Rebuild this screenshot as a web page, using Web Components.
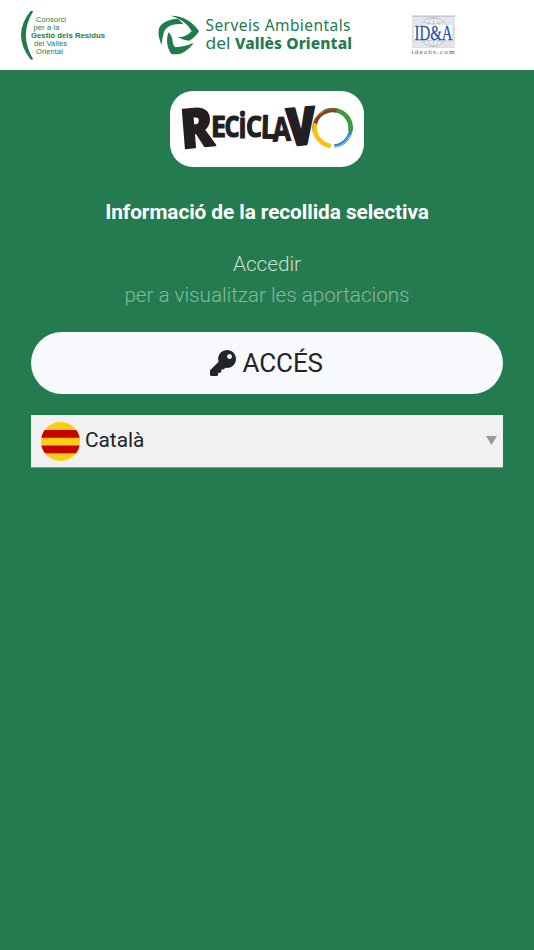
<!DOCTYPE html>
<html lang="ca"><head><meta charset="utf-8"><title>Reciclavo</title>
<style>body{margin:0;background:#257b50;font-family:Roboto,"Liberation Sans",sans-serif;color:#212529}</style></head>
<body><reciclavo-app></reciclavo-app>
<script>
const define=(name,html)=>{
  const t=document.createElement('template');t.innerHTML=html;
  customElements.define(name,class extends HTMLElement{
    constructor(){super();this.attachShadow({mode:'open'}).append(t.content.cloneNode(true));}
  });
};

define('consorci-logo',`<style>:host{display:block;width:88px;height:54px}svg{display:block;overflow:visible}text{font-family:"Liberation Sans",Arial,sans-serif;font-size:7.5px;fill:#257b50}</style>
<svg width="88" height="54" viewBox="20 8 88 54"><path d="M30.500 11 Q11.500 35 30.500 59.500 L33.300 59.500 Q18.500 35 33.300 11Z" fill="#207c4c"/>
<text x="36" y="22" textLength="30">Consorci</text><text x="33.5" y="30" textLength="26">per a la</text><text x="31" y="38" font-weight="bold" textLength="74" lengthAdjust="spacingAndGlyphs">Gestió dels Residus</text><text x="34" y="46.3" textLength="33">del Vallès</text><text x="36" y="54.3" textLength="27">Oriental</text></svg>`);

define('serveis-logo',`<style>:host{display:block;width:196px;height:42px}svg{display:block;overflow:visible}text{font-family:"Noto Sans","Open Sans",sans-serif;font-size:15.500px;fill:#257b50}</style>
<svg width="196" height="42" viewBox="158 14 196 42"><g fill="#207c4c" transform="translate(156 12) scale(.3333)">
<path d="M44 11 C76 10 110 27 129 58 Q118 76 100 86 Q84 86 66 76 Q90 76 107 58 C96 36 74 20 44 11Z"/>
<path d="M66 20 L83 37 C55 33 31 41 24 60 Q19 76 17 98 C6 76 5 56 12 43 C25 27 43 21 66 20Z"/>
<path d="M37 61 Q49 71 50 89 Q52 103 60 106 Q82 104 113 93 Q97 116 74 125 Q57 128 46 126 C33 108 30 84 37 61Z"/></g>
<text x="205.500" y="30.500" textLength="145" lengthAdjust="spacing">Serveis Ambientals</text><text x="205.500" y="49" textLength="25" lengthAdjust="spacingAndGlyphs">del</text><text x="235" y="49" font-weight="800" textLength="117">Vallès Oriental</text></svg>`);

define('idea-logo',`<style>:host{display:block;width:44px;height:40px}svg{display:block;overflow:visible}text{font-family:"Liberation Serif",serif;fill:#2854a5}</style>
<svg width="44" height="40" viewBox="411 15 44 40"><path fill="#dedee2" d="M412 16h43v32h-43z"/><g stroke="#f3f3f5" stroke-width=".7"><path d="M412 18h43M412 20h43M412 22h43M412 24h43M412 42h43M412 44h43M412 46h43"/></g><path d="M412 16h43" stroke="#9ba9ca" stroke-width=".8"/>
<g fill="none" stroke="#b9bdc8" stroke-width=".8"><circle cx="433.5" cy="32" r="14.5" fill="#ececef"/><ellipse cx="433.5" cy="32" rx="7" ry="14.5"/><path d="M433.500 17v29M423 22q10 4 21 0M423 42q10-4 21 0"/></g>
<path fill="#fff" d="M414 25h38v15h-38z"/>
<text x="414.500" y="39.500" font-size="20.500" textLength="38" lengthAdjust="spacingAndGlyphs" stroke="#2854a5" stroke-width=".3">ID&amp;A</text><text x="411.500" y="53.800" font-size="7" textLength="43">ideabs.com</text></svg>`);

define('app-header',`<style>:host{display:flex;box-sizing:border-box;height:70px;background:#fff;align-items:center;padding:0 79px 0 20px}::slotted(*){flex:none}::slotted(serveis-logo){margin-left:50px}::slotted(idea-logo){margin-left:auto}</style><slot></slot>`);

define('brand-card',`<style>:host{display:block;box-sizing:border-box;width:194px;height:76px;margin:21px auto 0;background:#fff;border-radius:23px}svg{display:block;overflow:visible}text{font-family:"Open Sans","Noto Sans",sans-serif;font-weight:700;fill:#231f20;stroke:#231f20;stroke-linejoin:round;stroke-width:1.200px}.xl{font-weight:800;stroke-width:2px}</style>
<svg width="194" height="76" viewBox="170 91 194 76">
<text><tspan class="xl" x="182" y="148.500" rotate="-5" font-size="54" textLength="33" lengthAdjust="spacingAndGlyphs">R</tspan><tspan x="211" y="137" font-size="29" textLength="15" lengthAdjust="spacingAndGlyphs">E</tspan><tspan x="224.500" y="137" font-size="29" textLength="15" lengthAdjust="spacingAndGlyphs">C</tspan><tspan x="238.500" y="137.500" font-size="35" textLength="8" lengthAdjust="spacingAndGlyphs">i</tspan><tspan x="246" y="137" font-size="29" textLength="16" lengthAdjust="spacingAndGlyphs">C</tspan><tspan x="260.500" y="138" rotate="2" font-size="32" textLength="15" lengthAdjust="spacingAndGlyphs">L</tspan><tspan x="273" y="141.500" rotate="-3" font-size="33" textLength="18" lengthAdjust="spacingAndGlyphs">A</tspan><tspan class="xl" x="287.500" y="146" rotate="-4" font-size="52" textLength="29" lengthAdjust="spacingAndGlyphs">V</tspan></text>
<g fill="none" stroke-width="4.600"><circle cx="332.700" cy="128" r="18" pathLength="360" stroke="#318ac7" stroke-width="3.600" stroke-dasharray="90 270" transform="rotate(-5 332.700 128)"/><circle cx="332.700" cy="128" r="18" pathLength="360" stroke="#379b40" stroke-dasharray="130 230" transform="rotate(-120 332.700 128)"/><circle cx="332.700" cy="128" r="18" pathLength="360" stroke="#8d382c" stroke-width="4" stroke-dasharray="105 255" transform="rotate(178 332.700 128)"/><circle cx="332.700" cy="128" r="18" pathLength="360" stroke="#fac10b" stroke-linecap="round" stroke-dasharray="86 274" transform="rotate(102 332.700 128)"/></g>
<g fill="none" stroke-width="1"><path stroke="#379b40" d="M319 114.500A19.500 19.500 0 0 1 346 114"/><path stroke="#d9952b" d="M313 132Q310.500 117 324 111"/><path stroke="#9fd1ef" d="M350 135A18 18 0 0 1 334 147"/></g></svg>`);

define('intro-text',`<style>:host{display:block;text-align:center;color:#fff;font-size:20.800px;line-height:31px;letter-spacing:-.07px}h1{margin:30px 0 21px;font-size:20.800px;line-height:31px;font-weight:700}p{margin:0;font-weight:300}.a{color:#c8dfd3}.b{color:#86b69d}</style><h1><slot name="title"></slot></h1><p class="a"><slot name="action"></slot></p><p class="b"><slot></slot></p>`);

define('access-button',`<style>:host{display:block;margin:21px 31px 0}button{display:flex;box-sizing:border-box;width:100%;height:62px;border:0;border-radius:31px;background:#f8f9fc;align-items:center;justify-content:center;gap:6.500px;font:400 26px Roboto,sans-serif;letter-spacing:-.1px;color:#212529;padding:0 1px 0 0}svg{width:26px;height:26px}</style>
<button><svg viewBox="0 0 512 512" fill="currentColor"><path d="M512 176.001C512 273.203 433.202 352 336 352c-11.220 0-22.190-1.062-32.827-3.069l-24.012 27.014A23.999 23.999 0 0 1 261.223 384H224v40c0 13.255-10.745 24-24 24h-40v40c0 13.255-10.745 24-24 24H24c-13.255 0-24-10.745-24-24v-78.059c0-6.365 2.529-12.470 7.029-16.971l161.802-161.802C163.108 213.814 160 195.271 160 176 160 78.798 238.797.001 335.999 0 433.488-.001 512 78.511 512 176.001zM336 128c0 26.510 21.490 48 48 48s48-21.490 48-48-21.490-48-48-48-48 21.490-48 48z"/></svg><span><slot></slot></span></button>`);

define('language-select',`<style>:host{display:flex;box-sizing:border-box;height:53px;margin:20.500px 31px 0;padding:0 6px 0 10px;background:#f1f1f1;border-bottom:1.500px solid #919191;align-items:center;font-size:20.800px;gap:5px}.flag{width:39px;height:39px;margin-top:1.500px}.arrow{margin-left:auto;width:11px;height:9px}.label{margin-top:-2px}svg{display:block}</style>
<svg class="flag" viewBox="0 0 39 39"><defs><clipPath id="c"><circle cx="19.500" cy="19.500" r="19.500"/></clipPath></defs><g clip-path="url(#c)"><path fill="#fc1" d="M0 0h39v39H0z"/><path fill="#c80000" d="M0 8h39v7.800H0zM0 23.500h39v7.800H0z"/></g></svg><span class="label"><slot></slot></span><svg class="arrow" viewBox="0 0 11 9"><path fill="#999" d="M0 0h11L5.500 9z"/></svg>`);

define('reciclavo-app',`<style>:host{display:block;min-height:950px}</style><app-header><consorci-logo></consorci-logo><serveis-logo></serveis-logo><idea-logo></idea-logo></app-header><brand-card></brand-card><intro-text><span slot="title">Informació de la recollida selectiva</span><span slot="action">Accedir</span>per a visualitzar les aportacions</intro-text><access-button>ACCÉS</access-button><language-select>Català</language-select>`);
</script></body></html>
